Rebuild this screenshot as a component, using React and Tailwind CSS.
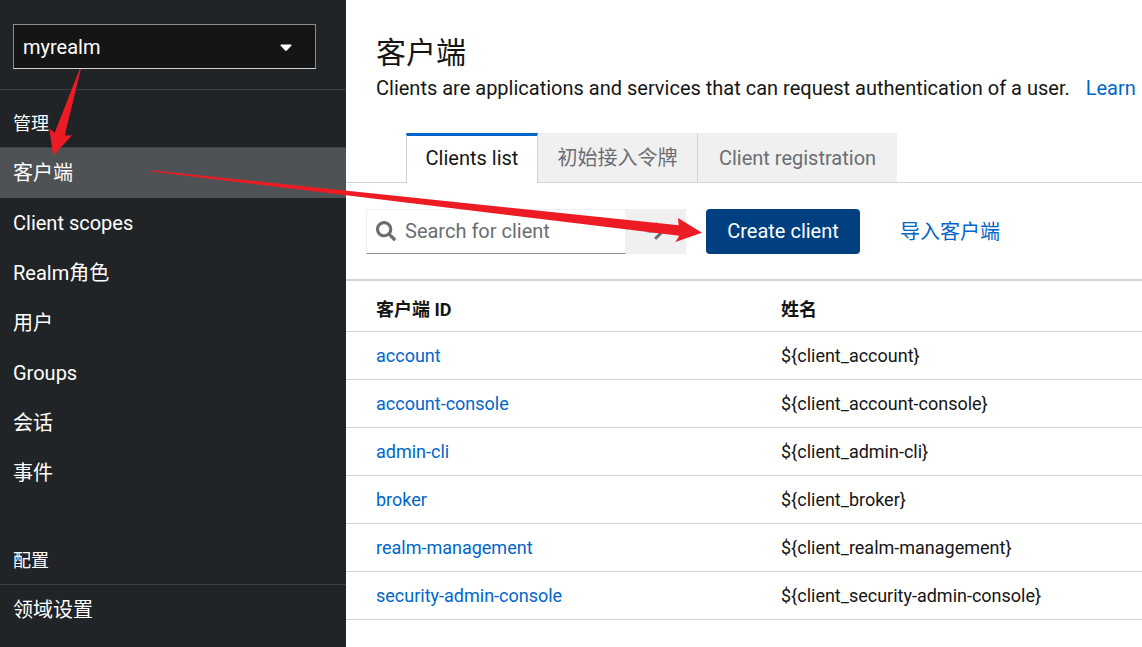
import { FaArrowRight, FaCaretDown, FaSearch } from 'react-icons/fa'

const manageItems = ['客户端', 'Client scopes', 'Realm角色', '用户', 'Groups', '会话', '事件']
const configureItems = ['领域设置']

const tabs = ['Clients list', '初始接入令牌', 'Client registration']

const clients = [
  { id: 'account', name: '${client_account}' },
  { id: 'account-console', name: '${client_account-console}' },
  { id: 'admin-cli', name: '${client_admin-cli}' },
  { id: 'broker', name: '${client_broker}' },
  { id: 'realm-management', name: '${client_realm-management}' },
  { id: 'security-admin-console', name: '${client_security-admin-console}' },
]

const NavSection = ({ title, items, active, className }) => (
  <section className={className}>
    <h2 className="px-[13px] pb-[9px] text-lg leading-7">{title}</h2>
    <ul>
      {items.map((item) => (
        <li key={item} className="first:border-t first:border-[#3c3f42]">
          <a
            href="#"
            className={`block h-[50px] px-[13px] leading-[50px] ${item === active ? 'bg-[#4f5255]' : 'hover:bg-[#3c3f42]'}`}
          >
            {item}
          </a>
        </li>
      ))}
    </ul>
  </section>
)

const Sidebar = () => (
  <aside className="w-[346px] shrink-0 bg-[#212427] text-white">
    <div className="border-b border-[#3c3f42] pt-6 pr-[30px] pb-5 pl-[13px]">
      <button
        type="button"
        className="flex h-[45px] w-full items-center justify-between border border-[#8a8d90] border-b-[#d2d2d2] bg-[#151515] pr-[23px] pl-[9px]"
      >
        <span>myrealm</span>
        <FaCaretDown className="h-5 w-3" preserveAspectRatio="none" />
      </button>
    </div>
    <nav>
      <NavSection title="管理" items={manageItems} active="客户端" className="pt-5" />
      <NavSection title="配置" items={configureItems} className="pt-[49px]" />
    </nav>
  </aside>
)

const Tabs = () => (
  <div role="tablist" className="flex border-b border-[#d2d2d2] pl-[60px]">
    {tabs.map((tab, i) => (
      <button
        key={tab}
        type="button"
        role="tab"
        aria-selected={i === 0}
        className={
          i === 0
            ? '-mb-px h-[50px] w-[132px] border-x border-t-3 border-x-[#d2d2d2] border-t-[#0066cc] bg-white pb-[3px] text-[#151515]'
            : 'h-[49px] w-40 border-r border-[#d2d2d2] bg-[#f0f0f0] text-[#6a6e73] last:w-[199px] last:border-r-0'
        }
      >
        {tab}
      </button>
    ))}
  </div>
)

const Toolbar = () => (
  <div className="flex h-[45px] items-stretch px-5">
    <form className="flex">
      <label className="flex w-[260px] items-center gap-[9px] border border-[#f0f0f0] border-b-[#8a8d90] pb-0.5 pl-[9px]">
        <FaSearch className="size-5 shrink-0 text-[#6a6e73]" />
        <input
          type="text"
          aria-label="Search for client"
          placeholder="Search for client"
          className="w-full min-w-0 outline-none placeholder:text-[#6a6e73]"
        />
      </label>
      <button type="button" aria-label="Search" className="flex w-[60px] items-center justify-center bg-[#f0f0f0] pb-0.5 text-[#6a6e73]">
        <FaArrowRight className="size-5" />
      </button>
    </form>
    <button type="button" className="ml-5 w-[154px] rounded-[4px] bg-[#004080] pb-0.5 text-white">
      Create client
    </button>
    <a href="#" className="ml-10 leading-[46px] text-[#0066cc]">导入客户端</a>
  </div>
)

const ClientTable = () => (
  <table className="w-full table-fixed border-t-2 border-[#d2d2d2] text-left text-lg">
    <thead>
      <tr className="h-[51px] border-b border-[#d2d2d2]">
        <th className="w-[405px] pt-2 pl-[30px] font-bold">客户端 ID</th>
        <th className="pt-2 pl-[30px] font-bold">姓名</th>
      </tr>
    </thead>
    <tbody>
      {clients.map((client) => (
        <tr key={client.id} className="h-12 border-b border-[#d2d2d2]">
          <td className="pt-px pl-[30px]">
            <a href="#" className="text-[#0066cc]">{client.id}</a>
          </td>
          <td className="pt-px pl-[30px]">{client.name}</td>
        </tr>
      ))}
    </tbody>
  </table>
)

// Red pointers drawn over the page: realm -> clients -> create button
const Pointers = () => (
  <svg className="pointer-events-none absolute top-0 left-0 fill-[#ed1c24]" width="720" height="260" aria-hidden="true">
    <path d="M79.7 69 L80.8 69 L64.7 135.4 L72 135.2 L53.3 155.8 L49.3 128.5 L54.7 132.7 Z" />
    <path d="M151 170.2 L678.7 225.3 L678 218 L702 232.7 L675.3 242 L679.3 235.7 L151 171.6 Z" />
  </svg>
)

const App = () => {
  return (
    <div className="relative flex min-h-screen overflow-hidden bg-white font-[Roboto,'Noto_Sans_CJK_SC',sans-serif] text-xl leading-[30px] text-[#151515]">
      <Sidebar />
      <main className="min-w-0 flex-1">
        <header className="pt-[33px] pb-[30px] pl-[30px]">
          <h1 className="text-3xl leading-10">客户端</h1>
          <p className="whitespace-nowrap">
            Clients are applications and services that can request authentication of a user.
            <a href="#" className="ml-4 text-[#0066cc]">Learn</a>
          </p>
        </header>
        <Tabs />
        <div className="pt-[26px] pb-[25px]">
          <Toolbar />
        </div>
        <ClientTable />
      </main>
      <Pointers />
    </div>
  )
}

export default App
